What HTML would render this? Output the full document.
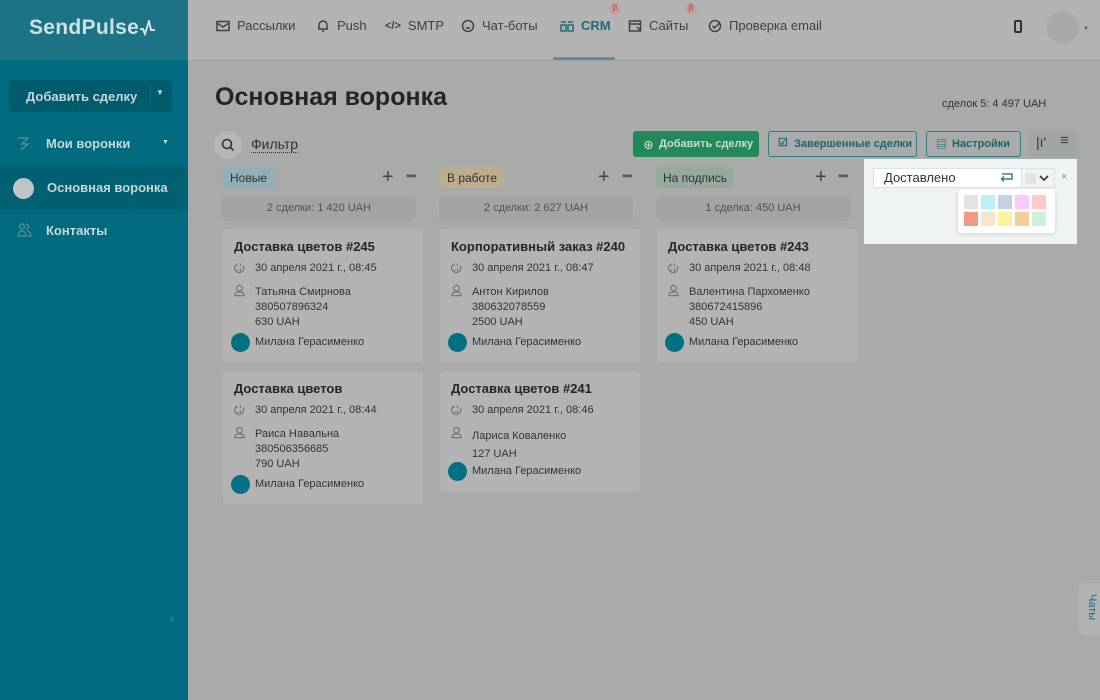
<!DOCTYPE html>
<html><head><meta charset="utf-8"><style>
*{box-sizing:border-box;margin:0;padding:0}
body{width:1100px;height:700px;overflow:hidden;font-family:"Liberation Sans","Noto Sans CJK SC",sans-serif;background:#a9aaaa;position:relative;color:#2b2b2b}
.side{position:absolute;left:0;top:0;width:188px;height:700px;background:#006b7e}
.logo{height:60px;background:#1b7385;color:#cfe0e3;font-size:21px;font-weight:bold;padding:16px 0 0 29px;letter-spacing:.3px}
.addb{position:absolute;left:9px;top:80px;width:163px;height:32px;background:#005c6c;border-radius:3px;color:#c6d6d9;font-size:13px;font-weight:bold;padding:9px 0 0 17px}
.addb:after{content:"";position:absolute;left:141px;top:6px;height:20px;border-left:1px dotted #2a7080}
.sm{position:absolute;left:0;width:188px;height:42px;color:#c6d6d9;font-size:13px;font-weight:bold;padding:13px 0 0 46px}
.top{position:absolute;left:188px;top:0;width:912px;height:60px;background:#b3b3b3}
.nav{position:absolute;top:18px;font-size:13px;color:#3d4244;display:flex;align-items:center;gap:7px}
.nav svg{width:14px;height:14px}
.title{position:absolute;left:215px;top:83px;font-size:25px;font-weight:bold;color:#252525}
.tag{position:absolute;top:167px;height:21px;border-radius:3px;font-size:12px;padding:4px 7px;color:#333}
.sum{position:absolute;top:196px;width:194px;height:25px;background:#a2a4a4;border-radius:5px;font-size:11px;color:#4f5354;text-align:center;padding-top:6px}
.card{position:absolute;width:200px;background:#b3b3b3;border-radius:3px;font-size:11px;color:#333}
.card b{position:absolute;left:11px;top:10px;font-size:13px;color:#262626}
.card .l{position:absolute;left:32px}
.av{position:absolute;left:8px;width:19px;height:19px;border-radius:50%;background:#007185}
.ic{position:absolute;left:10px;width:13px;height:13px}
.btn{position:absolute;top:131px;height:26px;border:1px solid #2f7a86;border-radius:3px;font-size:11px;font-weight:bold;color:#1d6570;padding:6px 0 0 25px}
.pm{position:absolute;top:168px;font-size:20px;color:#444;line-height:18px}
.dots{position:absolute;top:169px;font-size:12px;color:#555;letter-spacing:-1px}
</style></head><body>
<svg width="0" height="0" style="position:absolute"><defs>
<symbol id="cal" viewBox="0 0 14 14"><path d="M3 3a5 5 0 1 0 8 1M4 1.5v3M8 1.5v3M5 8v2M8 7v3" fill="none" stroke="#6b7a80" stroke-width="1.3"/></symbol>
<symbol id="usr" viewBox="0 0 14 14"><path d="M7 1.5a3 3 0 0 1 0 6a3 3 0 0 1 0-6M2 12.5c0-3 2-4 5-4s5 1 5 4z" fill="none" stroke="#6b7a80" stroke-width="1.3"/></symbol>
</defs></svg>
<div class="side">
<div class="logo">SendPulse<svg width="18" height="16" viewBox="0 0 18 16" style="vertical-align:-2px"><path d="M1 9h3l2 5 4-13 2 9h4" fill="none" stroke="#cfe0e3" stroke-width="2"/></svg></div>
<div class="addb">Добавить сделку<span style="position:absolute;left:147px;top:8px;font-size:8px">▼</span></div>
<div class="sm" style="top:123px">Мои воронки<svg style="position:absolute;left:17px;top:13px" width="13" height="15" viewBox="0 0 13 15"><path d="M1 2h10L5 8h6L4 14" fill="none" stroke="#4a8d98" stroke-width="1.5"/></svg><span style="position:absolute;left:162px;top:16px;font-size:7px">▼</span></div>
<div class="sm" style="top:167px;background:#005f70;padding-left:47px">Основная воронка<span style="position:absolute;left:13px;top:11px;width:21px;height:21px;border-radius:50%;background:#bfc5c6"></span></div>
<div class="sm" style="top:210px">Контакты<svg style="position:absolute;left:17px;top:12px" width="15" height="15" viewBox="0 0 15 15"><path d="M5 2a2.5 2.5 0 1 1 0 5a2.5 2.5 0 1 1 0-5M9 2a2.5 2.5 0 1 1 0 5M1 14c0-3 2-5 4-5s4 2 4 5zM10 9c2 0 4 2 4 5h-4" fill="none" stroke="#4a8d98" stroke-width="1.5"/></svg></div>
<div style="position:absolute;left:170px;top:610px;color:#4a8d98;font-size:14px">‹</div>
</div>
<div class="top">
<span class="nav" style="left:28px"><svg viewBox="0 0 14 14"><rect x="1" y="2.5" width="12" height="9" fill="none" stroke="#3d4244" stroke-width="1.5"/><path d="M1 4l6 4 6-4" fill="none" stroke="#3d4244" stroke-width="1.5"/></svg>Рассылки</span>
<span class="nav" style="left:128px"><svg viewBox="0 0 14 14"><path d="M3 10V6a4 4 0 0 1 8 0v4H2h10M6 12h2" fill="none" stroke="#3d4244" stroke-width="1.5"/></svg>Push</span>
<span class="nav" style="left:197px"><b style="font-size:11px">&lt;/&gt;</b>SMTP</span>
<span class="nav" style="left:273px"><svg viewBox="0 0 14 14"><circle cx="7" cy="7" r="5.5" fill="none" stroke="#3d4244" stroke-width="1.5"/><path d="M5 6h.1M9 6h.1M5 9h4" stroke="#3d4244" stroke-width="1.5"/></svg>Чат-боты</span>
<span class="nav" style="left:372px;color:#1f6d7a;font-weight:bold"><svg viewBox="0 0 14 14"><path d="M1 3h5M8 3h5M1 6h5v6H1zM8 6h5v6H8z" fill="none" stroke="#1f6d7a" stroke-width="1.5"/></svg>CRM</span>
<span class="nav" style="left:440px"><svg viewBox="0 0 14 14"><rect x="1.5" y="2" width="11" height="10" fill="none" stroke="#3d4244" stroke-width="1.5"/><path d="M1.5 5h11M9 8l3 3" stroke="#3d4244" stroke-width="1.5"/></svg>Сайты</span>
<span class="nav" style="left:520px"><svg viewBox="0 0 14 14"><circle cx="7" cy="7" r="5.5" fill="none" stroke="#3d4244" stroke-width="1.5"/><path d="M4.5 7l2 2 5-5" fill="none" stroke="#3d4244" stroke-width="1.5"/></svg>Проверка email</span>
<span style="position:absolute;left:421px;top:3px;width:12px;height:12px;border-radius:50%;background:#c79e9e;font-size:8px;color:#b33;text-align:center">β</span>
<span style="position:absolute;left:497px;top:3px;width:12px;height:12px;border-radius:50%;background:#c79e9e;font-size:8px;color:#b33;text-align:center">β</span>
<div style="position:absolute;left:365px;top:57px;width:62px;height:3px;background:#5a8f98"></div>
<div style="position:absolute;left:826px;top:20px;width:8px;height:13px;border:2px solid #333;border-radius:2px"></div>
<div style="position:absolute;left:858px;top:11px;width:33px;height:33px;border-radius:50%;background:#a9a9a9"></div>
<span style="position:absolute;left:895px;top:26px;font-size:6px;color:#555">▼</span>
</div>
<div style="position:absolute;left:188px;top:60px;width:912px;height:1px;background:#a0a0a0"></div>
<div class="title">Основная воронка</div>
<div style="position:absolute;left:942px;top:98px;font-size:11px;color:#333">сделок 5: 4 497 UAH</div>
<div style="position:absolute;left:214px;top:131px;width:28px;height:28px;border-radius:50%;background:#b6b6b6"><svg width="28" height="28" viewBox="0 0 28 28"><circle cx="13" cy="13" r="4.5" fill="none" stroke="#334" stroke-width="1.6"/><path d="M16.5 16.5l3 3" stroke="#334" stroke-width="1.6"/></svg></div>
<div style="position:absolute;left:251px;top:136px;font-size:14px;color:#333;border-bottom:1px dotted #333">Фильтр</div>
<div class="btn" style="left:633px;width:126px;background:#23895a;border-color:#23895a;color:#c8dcd2">Добавить сделку<span style="position:absolute;left:9px;top:5px">⊕</span></div>
<div class="btn" style="left:768px;width:149px">Завершенные сделки<span style="position:absolute;left:9px;top:4px">☑</span></div>
<div class="btn" style="left:926px;width:95px">Настройки<span style="position:absolute;left:9px;top:4px">▤</span></div>
<div style="position:absolute;left:1029px;top:131px;width:48px;height:26px;border:1px solid #9aa;border-radius:3px;background:#a3a5a5"></div>
<div style="position:absolute;left:1053px;top:131px;width:1px;height:26px;background:#9aa"></div>
<div style="position:absolute;left:1036px;top:134px;font-size:14px;color:#333">|ı'</div>
<div style="position:absolute;left:1060px;top:132px;font-size:15px;color:#444">≡</div>

<div class="tag" style="left:223px;background:#8fb0b6">Новые</div>
<div class="pm" style="left:382px">+</div><div class="dots" style="left:406px">•••</div>
<div class="tag" style="left:440px;background:#bcad8d">В работе</div>
<div class="pm" style="left:598px">+</div><div class="dots" style="left:622px">•••</div>
<div class="tag" style="left:656px;background:#93aa9d">На подпись</div>
<div class="pm" style="left:815px">+</div><div class="dots" style="left:838px">•••</div>
<div class="sum" style="left:222px">2 сделки: 1 420 UAH</div>
<div class="sum" style="left:439px">2 сделки: 2 627 UAH</div>
<div class="sum" style="left:656px">1 сделка: 450 UAH</div>

<div class="card" style="left:223px;top:229px;height:133px"><b>Доставка цветов #245</b><svg class="ic" style="top:33px"><use href="#cal"/></svg><span class="l" style="top:33px">30 апреля 2021 г., 08:45</span><svg class="ic" style="top:55px"><use href="#usr"/></svg><span class="l" style="top:56px;line-height:15px">Татьяна Смирнова<br>380507896324<br>630 UAH</span><span class="av" style="top:104px"></span><span class="l" style="top:107px">Милана Герасименко</span></div>
<div class="card" style="left:440px;top:229px;height:133px"><b>Корпоративный заказ #240</b><svg class="ic" style="top:33px"><use href="#cal"/></svg><span class="l" style="top:33px">30 апреля 2021 г., 08:47</span><svg class="ic" style="top:55px"><use href="#usr"/></svg><span class="l" style="top:56px;line-height:15px">Антон Кирилов<br>380632078559<br>2500 UAH</span><span class="av" style="top:104px"></span><span class="l" style="top:107px">Милана Герасименко</span></div>
<div class="card" style="left:657px;top:229px;height:133px"><b>Доставка цветов #243</b><svg class="ic" style="top:33px"><use href="#cal"/></svg><span class="l" style="top:33px">30 апреля 2021 г., 08:48</span><svg class="ic" style="top:55px"><use href="#usr"/></svg><span class="l" style="top:56px;line-height:15px">Валентина Пархоменко<br>380672415896<br>450 UAH</span><span class="av" style="top:104px"></span><span class="l" style="top:107px">Милана Герасименко</span></div>
<div class="card" style="left:223px;top:371px;height:133px"><b>Доставка цветов</b><svg class="ic" style="top:33px"><use href="#cal"/></svg><span class="l" style="top:33px">30 апреля 2021 г., 08:44</span><svg class="ic" style="top:55px"><use href="#usr"/></svg><span class="l" style="top:56px;line-height:15px">Раиса Навальна<br>380506356685<br>790 UAH</span><span class="av" style="top:104px"></span><span class="l" style="top:107px">Милана Герасименко</span></div>
<div class="card" style="left:440px;top:371px;height:121px"><b>Доставка цветов #241</b><svg class="ic" style="top:33px"><use href="#cal"/></svg><span class="l" style="top:33px">30 апреля 2021 г., 08:46</span><svg class="ic" style="top:55px"><use href="#usr"/></svg><span class="l" style="top:56px;line-height:18px">Лариса Коваленко<br>127 UAH</span><span class="av" style="top:91px"></span><span class="l" style="top:94px">Милана Герасименко</span></div>

<div style="position:absolute;left:864px;top:159px;width:213px;height:85px;background:#f0f3f4"></div>
<div style="position:absolute;left:873px;top:168px;width:182px;height:20px;background:#fff;border:1px solid #dde3e5;border-radius:2px;font-size:13px;color:#333;padding:1px 0 0 10px;overflow:hidden">Доставлено<svg style="position:absolute;left:125px;top:3px" width="16" height="12" viewBox="0 0 16 12"><path d="M3 2h10v5H3M5 4.5L2.5 7 5 9.5" fill="none" stroke="#3a7f8a" stroke-width="1.5"/></svg><span style="position:absolute;left:147px;top:0;width:34px;height:20px;background:#f0f3f4;border-left:1px solid #dde3e5"></span><span style="position:absolute;left:151px;top:4px;width:11px;height:11px;background:#e3e3e3"></span><svg style="position:absolute;left:165px;top:6px" width="10" height="7" viewBox="0 0 10 7"><path d="M1 1l4 4 4-4" fill="none" stroke="#333" stroke-width="1.6"/></svg></div>
<div style="position:absolute;left:1061px;top:171px;font-size:11px;color:#889">×</div>
<div style="position:absolute;left:958px;top:189px;width:97px;height:44px;background:#fff;border-radius:3px;box-shadow:0 1px 4px rgba(0,0,0,.15)"></div>
<div style="position:absolute;left:964px;top:195px;display:grid;grid-template-columns:repeat(5,14px);gap:3px 3px">
<i style="height:14px;background:#e3e3e3"></i><i style="background:#bdeef9"></i><i style="background:#c5d0e2"></i><i style="background:#f7ccfa"></i><i style="background:#ffc9c9"></i>
<i style="height:14px;background:#f09c84"></i><i style="background:#f7e6c8"></i><i style="background:#fbf49a"></i><i style="background:#f6cd98"></i><i style="background:#ccf2dc"></i></div>
<div style="position:absolute;left:1079px;top:583px;width:24px;height:52px;background:#b3b3b3;border-radius:5px 0 0 5px"></div>
<div style="position:absolute;top:594px;transform:rotate(90deg);transform-origin:left top;left:1098px;font-size:11px;color:#1e6f7b">Чаты</div>
</body></html>
